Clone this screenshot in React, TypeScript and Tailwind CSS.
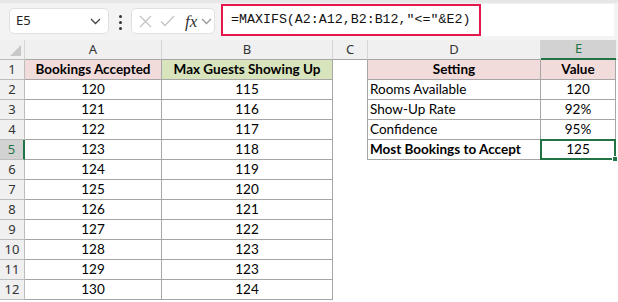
import React from 'react'

const rows = [
  [120, 115],
  [121, 116],
  [122, 117],
  [123, 118],
  [124, 119],
  [125, 120],
  [126, 121],
  [127, 122],
  [128, 123],
  [129, 123],
  [130, 124],
]

const settings: [string, string, boolean][] = [
  ['Rooms Available', '120', false],
  ['Show-Up Rate', '92%', false],
  ['Confidence', '95%', false],
  ['Most Bookings to Accept', '125', true],
]

const cols = ['A', 'B', 'C', 'D', 'E']

const cellFont = { fontFamily: 'Lato, "Liberation Sans", sans-serif' }

function Chevron({ className = '' }: { className?: string }) {
  return (
    <svg className={className} width="11" height="7" viewBox="0 0 11 7" fill="none" stroke="currentColor" strokeWidth="1.3">
      <path d="M1 1l4.5 4.5L10 1" />
    </svg>
  )
}

function FormulaBar() {
  return (
    <div className="flex h-[40px] bg-[#f3f3f3] border-t-[3px] border-[#e6e6e6] items-start">
      {/* name box */}
      <div className="ml-[9px] mt-[5px] w-[100px] h-[26px] bg-white border border-[#e1e1e1] rounded-[5px] flex items-center justify-between pl-[6px] pr-[7px] text-[13px] text-[#222]" style={{ fontFamily: '"Noto Sans", sans-serif' }}>
        <span>E5</span>
        <Chevron className="text-[#444]" />
      </div>
      {/* dots */}
      <div className="w-[22px] mt-[12px] flex flex-col items-center gap-[3px]">
        <div className="w-[3px] h-[3px] bg-[#333] rounded-full" />
        <div className="w-[3px] h-[3px] bg-[#333] rounded-full" />
        <div className="w-[3px] h-[3px] bg-[#333] rounded-full" />
      </div>
      {/* fx box */}
      <div className="mt-[5px] w-[84px] h-[26px] bg-white border border-[#e1e1e1] rounded-[5px] flex items-center pl-[7px] gap-[8px]">
        <svg width="13" height="13" viewBox="0 0 13 13" stroke="#c4c4c4" strokeWidth="1.3" fill="none">
          <path d="M1 1l11 11M12 1L1 12" />
        </svg>
        <svg width="15" height="12" viewBox="0 0 15 12" stroke="#c4c4c4" strokeWidth="1.3" fill="none">
          <path d="M1 6.5l4 4L14 1" />
        </svg>
        <span className="italic text-[17px] text-[#333] leading-none ml-[2px]" style={{ fontFamily: '"Liberation Serif", serif' }}>fx</span>
        <Chevron className="text-[#999] -ml-[4px]" />
      </div>
      {/* formula input */}
      <div className="ml-[6px] mt-[1px] flex-1 mr-[4px] h-[32px] bg-white flex">
        <div className="w-[260px] h-full border-2 border-[#e3174c] flex items-center pl-[8px] text-[13.3px] text-[#111]" style={{ fontFamily: '"Liberation Mono", monospace' }}>
          =MAXIFS(A2:A12,B2:B12,"&lt;="&amp;E2)
        </div>
      </div>
    </div>
  )
}

export default function App() {
  const hdr = 'h-5 bg-[#f0f0f0] border-r border-b border-[#d4d4d4] flex items-center justify-center text-[13px] text-[#333]'
  const grid = 'border-r border-b border-[#a6a6a6]'

  return (
    <div className="w-[618px] h-[302px] bg-white overflow-hidden">
      <FormulaBar />
      <div className="grid grid-cols-[25px_137px_171px_35px_173px_75px_2px] text-black text-[13.5px]" style={cellFont}>
        {/* column headers */}
        <div className={`${hdr} relative border-b-[#bdbdbd]`}>
          <div className="absolute right-[3px] bottom-[3px] w-0 h-0 border-l-[11px] border-l-transparent border-b-[11px] border-b-[#c8c8c8]" />
        </div>
        {cols.map((c) => (
          <div
            key={c}
            className={
              c === 'E'
                ? 'h-5 bg-[#d2d2d2] border-b-2 border-[#217346] flex items-center justify-center text-[13px] text-[#217346]'
                : `${hdr} border-b-[#a6a6a6]`
            }
            style={{ fontFamily: '"Noto Sans", sans-serif' }}
          >
            {c}
          </div>
        ))}
        <div className="h-5 bg-[#f0f0f0] border-b border-[#d4d4d4]" />

        {/* row 1 */}
        <RowHead n={1} />
        <div className={`${grid} h-5 bg-[#f2dcdb] font-bold flex items-center justify-center`}>Bookings Accepted</div>
        <div className={`${grid} h-5 bg-[#d8e4bc] font-bold flex items-center justify-center`}>Max Guests Showing Up</div>
        <div className="h-5 border-r border-[#a6a6a6]" />
        <div className={`${grid} h-5 bg-[#f2dcdb] font-bold flex items-center justify-center`}>Setting</div>
        <div className={`${grid} h-5 bg-[#f2dcdb] font-bold flex items-center justify-center`}>Value</div>
        <div />

        {rows.map(([a, b], i) => {
          const r = i + 2
          const s = i < 4 ? settings[i] : null
          return (
            <React.Fragment key={r}>
              <RowHead n={r} />
              <div className={`${grid} h-5 flex items-center justify-center`}>{a}</div>
              <div className={`${grid} h-5 flex items-center justify-center`}>{b}</div>
              <div className={s ? 'h-5 border-r border-[#a6a6a6]' : 'h-5'} />
              {s ? (
                <>
                  <div className={`${grid} h-5 flex items-center pl-[2px] ${s[2] ? 'font-bold' : ''}`}>{s[0]}</div>
                  <div className={`${grid} h-5 flex items-center justify-center relative`}>
                    {s[1]}
                    {s[2] && (
                      <div className="absolute -left-[1px] -top-[1px] -right-[1px] -bottom-[1px] border-2 border-[#217346]">
                        <div className="absolute -right-[4px] -bottom-[4px] w-[6px] h-[6px] bg-[#217346] border border-white" />
                      </div>
                    )}
                  </div>
                </>
              ) : (
                <>
                  <div className="h-5" />
                  <div className="h-5" />
                </>
              )}
              <div />
            </React.Fragment>
          )
        })}
      </div>
    </div>
  )
}

function RowHead({ n }: { n: number }) {
  const sel = n === 5
  return (
    <div
      className={
        sel
          ? 'h-5 bg-[#d2d2d2] border-r-2 border-r-[#217346] border-b border-b-[#bdbdbd] flex items-center justify-center text-[13px] text-[#217346]'
          : 'h-5 bg-[#f0f0f0] border-r border-b border-[#bdbdbd] flex items-center justify-center text-[13px] text-[#333]'
      }
      style={{ fontFamily: '"Noto Sans", sans-serif' }}
    >
      {n}
    </div>
  )
}
